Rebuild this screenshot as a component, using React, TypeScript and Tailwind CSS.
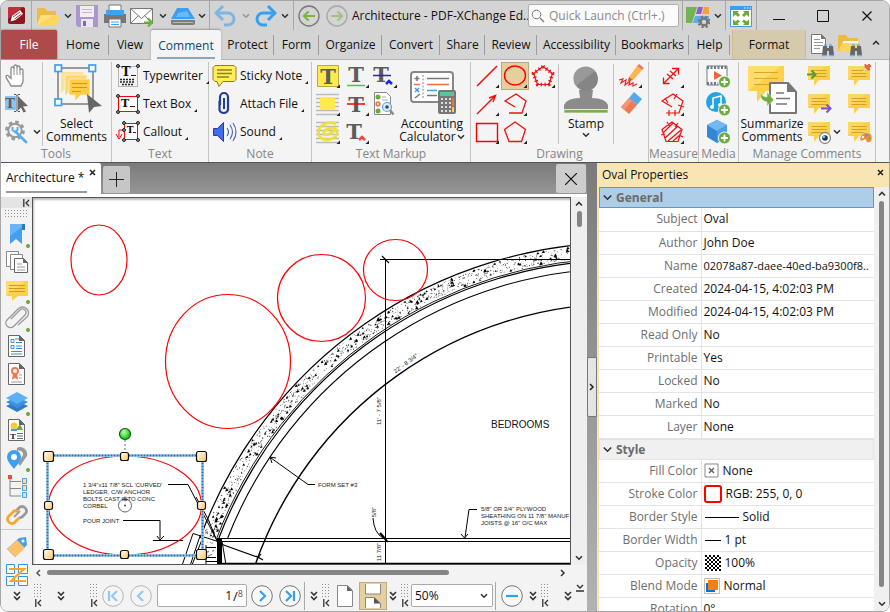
import { useState } from 'react';
import type { ReactNode } from 'react';

const tabs = [
  { label: 'Home', width: 'w-[52px]', divider: true },
  { label: 'View', width: 'w-[42px]', divider: false },
  { label: 'Comment', width: 'w-[70px]', divider: false },
  { label: 'Protect', width: 'w-[53px]', divider: true },
  { label: 'Form', width: 'w-[45px]', divider: true },
  { label: 'Organize', width: 'w-[63px]', divider: true },
  { label: 'Convert', width: 'w-[58px]', divider: true },
  { label: 'Share', width: 'w-[45px]', divider: true },
  { label: 'Review', width: 'w-[52px]', divider: true },
  { label: 'Accessibility', width: 'w-[79px]', divider: true },
  { label: 'Bookmarks', width: 'w-[73px]', divider: true },
  { label: 'Help', width: 'w-[41px]', divider: true },
];

const generalRows: [string, string][] = [
  ['Subject', 'Oval'],
  ['Author', 'John Doe'],
  ['Name', '02078a87-daee-40ed-ba9300f8..'],
  ['Created', '2024-04-15, 4:02:03 PM'],
  ['Modified', '2024-04-15, 4:02:03 PM'],
  ['Read Only', 'No'],
  ['Printable', 'Yes'],
  ['Locked', 'No'],
  ['Marked', 'No'],
  ['Layer', 'None'],
];

/* ---------- shared bits ---------- */

function Icon({ children, className = 'size-7', box = 28 }: { children: ReactNode; className?: string; box?: number }) {
  return (
    <svg viewBox={`0 0 ${box} ${box}`} className={`${className} shrink-0`} fill="none" aria-hidden="true">
      {children}
    </svg>
  );
}

function Chevron({ dim = false, up = false }: { dim?: boolean; up?: boolean }) {
  return (
    <svg width="8" height="6" viewBox="0 0 8 6" className="shrink-0" fill="none" aria-hidden="true">
      <path d={up ? 'M1 4.5 4 1.5l3 3' : 'M1 1.2l3 3 3-3'} stroke={dim ? '#999' : '#333'} strokeWidth="1.6" />
    </svg>
  );
}

function DoubleChevron() {
  return (
    <svg width="8" height="10" viewBox="0 0 8 10" className="shrink-0" fill="none" stroke="#333" strokeWidth="1.6" aria-hidden="true">
      <path d="M1 1l3 3 3-3M1 5.5l3 3 3-3" />
    </svg>
  );
}

function Dots({ cols, rows }: { cols: number; rows: number }) {
  return (
    <svg width={cols * 3} height={rows * 3} className="shrink-0" aria-hidden="true">
      {Array.from({ length: rows }, (_, i) => (
        <path key={i} d={`M0 ${i * 3 + 0.5}h${cols * 3}`} stroke="#8f8f8f" strokeDasharray="1 2" />
      ))}
    </svg>
  );
}

function Collapse() {
  return (
    <svg width="7" height="8" viewBox="0 0 7 8" className="shrink-0" fill="none" stroke="#333" strokeWidth="1.3" aria-hidden="true">
      <path d="M.8 0v8M6 1L3 4l3 3" />
    </svg>
  );
}

function Grip() {
  return (
    <span className="flex w-[10px] shrink-0 flex-col items-center self-start pt-1">
      <Dots cols={3} rows={5} />
      <Collapse />
    </span>
  );
}

function Corner() {
  return <path d="M26 22.500v3.500h-3.500z" fill="#222" />;
}

function Sep() {
  return <span className="w-px shrink-0 self-stretch bg-[#a8a8a8]" />;
}

function IconButton({ label, children, className = '' }: { label: string; children: ReactNode; className?: string }) {
  return (
    <button type="button" aria-label={label} className={`flex shrink-0 items-center justify-center ${className}`}>
      {children}
    </button>
  );
}

function Bubble({ children }: { children?: ReactNode }) {
  return (
    <Icon>
      <path d="M3 4h22v14H14l-5 6v-6H3z" fill="#fdd04a" />
      <path d="M3 18V4h18z" fill="#fff" opacity=".15" />
      <path d="M6.500 8.500h15M6.500 11.500h15M6.500 14.500h15" stroke="#d0a22c" />
      {children}
    </Icon>
  );
}

function Plus() {
  return (
    <>
      <circle cx="20.500" cy="20" r="6" fill="#6cab3f" stroke="#f4f4f4" />
      <path d="M20.500 16.500v7M17 20h7" stroke="#fff" strokeWidth="1.8" />
    </>
  );
}

const serif = "'DejaVu Serif', serif";

function Glyph({ x = 14, y = 22, size = 21, fill = '#5c5c5c' }: { x?: number; y?: number; size?: number; fill?: string }) {
  return (
    <text x={x} y={y} fontFamily={serif} fontSize={size} fontWeight="bold" fill={fill} textAnchor="middle">
      T
    </text>
  );
}

/* ---------- title bar ---------- */

function TitleBar() {
  return (
    <header className="flex h-[29px] shrink-0 items-center bg-[#d4d4d4]">
      <span className="flex w-[30px] shrink-0 items-center justify-center">
        <svg width="17" height="17" viewBox="0 0 17 17" aria-hidden="true">
          <rect width="17" height="17" rx="2" fill="#8d1620" />
          <path d="M0 2a2 2 0 012-2h13L0 12z" fill="#c0303a" />
          <path d="M2.500 14.500l1.500-5.500L12 3l3 4-7.500 6z" fill="#fff" />
          <path d="M5 10l7-5M6.500 12l7-5" stroke="#a51e28" strokeWidth=".9" />
        </svg>
      </span>
      <Sep />
      <IconButton label="Open" className="ml-1">
        <Icon className="h-6 w-6" box={24}>
          <path d="M1 4h8l2 3h9v13H1z" fill="#eebb42" />
          <path d="M1 21L5 11h19l-4 11H1z" fill="#fed65c" />
          <path d="M1 21L5 11h13z" fill="#ffe07c" />
        </Icon>
      </IconButton>
      <IconButton label="Open options" className="w-[15px]"><Chevron /></IconButton>
      <IconButton label="Save">
        <Icon className="h-6 w-6" box={24}>
          <path d="M1 1h22v22H3l-2-2z" fill="#ac96cf" />
          <rect x="5" y="2" width="14" height="11" fill="#f0eef3" />
          <path d="M7 5.500h10M7 8.500h10" stroke="#c0b9c9" />
          <rect x="6" y="15" width="12" height="8" fill="#ece8f1" />
          <rect x="8" y="17" width="3" height="5" fill="#8268ae" />
        </Icon>
      </IconButton>
      <IconButton label="Print" className="ml-1">
        <Icon className="h-6 w-6" box={24}>
          <path d="M6 1h12v7H6z" fill="#fff" stroke="#777" />
          <path d="M1 10h4V7h14v3h4v9H1z" fill="#777" />
          <path d="M3 6h18v5H3z" fill="#3da4f5" />
          <path d="M6 15h12v8H6z" fill="#fff" stroke="#777" />
          <path d="M8 18h8M8 20.500h8" stroke="#3da4f5" />
        </Icon>
      </IconButton>
      <IconButton label="Email" className="ml-[3px]">
        <Icon className="h-6 w-6" box={24}>
          <path d="M.5 4.500h22v15H.5z" fill="#fafafa" stroke="#777" />
          <path d="M.5 4.500l11 10 11-10M.5 19.500l8-8M22.500 19.500l-8-8" stroke="#777" />
          <path d="M14 18.500h7M18 14.500l4 4-4 4" stroke="#6fae3a" strokeWidth="2.200" />
        </Icon>
      </IconButton>
      <IconButton label="Email options" className="w-[17px]"><Chevron /></IconButton>
      <IconButton label="Scan">
        <Icon className="h-6 w-6" box={24}>
          <path d="M6 4h11l7 11H0z" fill="#3d9df0" />
          <path d="M7 9l9-2 3 6H5z" fill="#6ab9f8" />
          <path d="M0 16h24v3a2 2 0 01-2 2H2a2 2 0 01-2-2z" fill="#7d7d7d" />
          <path d="M2 18.500h20" stroke="#b9b9b9" />
        </Icon>
      </IconButton>
      <IconButton label="Scan options" className="w-[14px]"><Chevron /></IconButton>
      <Sep />
      <IconButton label="Undo" className="ml-1 opacity-60">
        <Icon className="h-6 w-6" box={24}>
          <path d="M4 9h10a6 6 0 010 12h-4" stroke="#47a0e8" strokeWidth="3" />
          <path d="M9 2L2 9l7 7" stroke="#47a0e8" strokeWidth="3" />
        </Icon>
      </IconButton>
      <IconButton label="Undo history" className="w-4"><Chevron dim /></IconButton>
      <IconButton label="Redo" className="-ml-px">
        <Icon className="h-6 w-6" box={24}>
          <path d="M20 9H10a6 6 0 000 12h4" stroke="#359ff2" strokeWidth="3" />
          <path d="M15 2l7 7-7 7" stroke="#359ff2" strokeWidth="3" />
        </Icon>
      </IconButton>
      <IconButton label="Redo history" className="w-4"><Chevron /></IconButton>
      <Sep />
      <IconButton label="Back" className="ml-1">
        <Icon className="h-[22px] w-[22px]" box={22}>
          <circle cx="11" cy="11" r="10" stroke="#777" strokeWidth="1.300" />
          <path d="M17 11H7M10.500 6.500L6 11l4.500 4.500" stroke="#78b63c" strokeWidth="2.200" />
        </Icon>
      </IconButton>
      <IconButton label="Forward" className="ml-[6px] opacity-60">
        <Icon className="h-[22px] w-[22px]" box={22}>
          <circle cx="11" cy="11" r="10" stroke="#888" strokeWidth="1.300" />
          <path d="M5 11h10M11.500 6.500L16 11l-4.500 4.500" stroke="#82b650" strokeWidth="2.200" />
        </Icon>
      </IconButton>
      <h1 className="min-w-0 flex-1 overflow-hidden pl-1 whitespace-nowrap">Architecture - PDF-XChange Ed..</h1>
      <label className="flex h-[23px] w-[151px] shrink-0 items-center gap-1 rounded-xs border border-[#b0b0b0] bg-[#fbfbfb] px-[2px]">
        <Icon className="h-[14px] w-[14px]" box={14}>
          <circle cx="5.500" cy="5.500" r="4.300" stroke="#777" />
          <path d="M9 9l4 4" stroke="#777" strokeWidth="1.300" />
        </Icon>
        <input aria-label="Quick Launch" placeholder="Quick Launch (Ctrl+.)" className="w-full min-w-0 bg-transparent outline-none placeholder:text-[#8a8a8a]" />
      </label>
      <span className="ml-[3px] flex self-stretch"><Sep /></span>
      <IconButton label="UI options" className="ml-[3px]">
        <Icon className="h-6 w-6" box={24}>
          <path d="M0 3h11L6 19H0z" fill="#72b356" />
          <path d="M12 3h5l-2 7h-5z" fill="#8f5bd0" />
          <path d="M18 3h5v7h-7z" fill="#f3a13c" />
          <path d="M9 12h14v7H7z" fill="#58aef1" />
          <circle cx="18" cy="18" r="5" stroke="#777" strokeWidth="3" strokeDasharray="2 2" />
          <circle cx="18" cy="18" r="3.400" fill="#d4d4d4" stroke="#777" strokeWidth="2.400" />
        </Icon>
      </IconButton>
      <IconButton label="UI options menu" className="w-[15px]"><Chevron /></IconButton>
      <Sep />
      <IconButton label="Full screen" className="w-[30px]">
        <Icon className="h-[22px] w-[22px]" box={22}>
          <path d="M.5 2.500h21v19H.5z" fill="#fff" stroke="#3b9df0" />
          <path d="M0 1h22v4H0z" fill="#3b9df0" />
          <path d="M14 3h1.500M17 3h1.500M20 3h1" stroke="#fff" />
          <g fill="#6aaa36">
            <path d="M3 6h6L7.500 7.500l2.500 2.500-2 2L5.500 9.500 3 12z" />
            <path d="M19 6h-6l1.500 1.500L12 10l2 2 2.500-2.500L19 12z" />
            <path d="M3 20h6l-1.500-1.500 2.500-2-2-2-2.500 2L3 14.500z" />
            <path d="M19 20h-6l1.500-1.500-2.500-2 2-2 2.500 2 2.500-2z" />
          </g>
        </Icon>
      </IconButton>
      <Sep />
      <IconButton label="Minimize" className="h-full w-11">
        <svg width="12" height="12" stroke="#111" aria-hidden="true"><path d="M0 9.500h12" /></svg>
      </IconButton>
      <IconButton label="Maximize" className="h-full w-11">
        <svg width="12" height="12" stroke="#111" fill="none" aria-hidden="true"><path d="M.5.5h11v11H.5z" /></svg>
      </IconButton>
      <IconButton label="Close" className="h-full w-11">
        <svg width="12" height="12" stroke="#111" fill="none" aria-hidden="true"><path d="M1.500 1.500l9 9M10.500 1.500l-9 9" strokeWidth="1.200" /></svg>
      </IconButton>
    </header>
  );
}

/* ---------- ribbon tabs ---------- */

function Binoculars() {
  return (
    <>
      <path d="M13 13h4v2h2v-2h4l1 9h-5v-4h-2v4h-5z" fill="#666" />
      <path d="M14 12h3M19 12h3M12 22.500h5M19 22.500h5" stroke="#5fb0ee" strokeWidth="1.500" />
    </>
  );
}

function RibbonTabs({ active, onSelect }: { active: string; onSelect: (label: string) => void }) {
  return (
    <nav aria-label="Ribbon" className="flex h-[30px] shrink-0 items-stretch border-b border-[#b4b4b4] bg-[#d4d4d4]">
      <button type="button" className="w-14 shrink-0 rounded-t-xs bg-[#ad4a4a] pt-px text-white shadow-[0_0_2px_#555]">File</button>
      {tabs.map((tab) => {
        const isActive = tab.label === active;
        return (
          <button
            key={tab.label}
            type="button"
            aria-current={isActive ? 'page' : undefined}
            onClick={() => onSelect(tab.label)}
            className={`relative flex shrink-0 items-center justify-center pt-px whitespace-nowrap ${tab.width} ${
              isActive ? 'z-10 -mb-px rounded-t-xs bg-[#f4f4f4] text-[#124670] shadow-[0_-1px_2px_#999]' : 'text-[#111]'
            }`}
          >
            {tab.label}
            {isActive && <span className="absolute inset-x-[6px] bottom-px h-[2px] bg-[#88a6bd]" />}
            {tab.divider && !isActive && <span className="absolute top-[5px] right-0 h-5 w-px bg-[#9b9b9b]" />}
          </button>
        );
      })}
      <button type="button" className="ml-[2px] w-[74px] shrink-0 border-x border-[#cbbd8c] bg-[#d5cbac] pt-px text-[#111]">Format</button>
      <IconButton label="Find in page" className="ml-1">
        <Icon className="h-6 w-6" box={24}>
          <path d="M1.500 1.500h10l4 4v15h-14z" fill="#fff" stroke="#777" />
          <path d="M11 1v5h5z" fill="#777" />
          <path d="M4 6.500h6M4 9.500h9M4 12.500h9M4 15.500h6" stroke="#999" />
          <Binoculars />
        </Icon>
      </IconButton>
      <IconButton label="Find in folder" className="ml-1">
        <Icon className="h-6 w-6" box={24}>
          <path d="M0 2h8l2 3h10v14H0z" fill="#eebb42" />
          <path d="M5 8h15v11H3z" fill="#fff" />
          <path d="M0 19l4-9h19l-4 9z" fill="#fed65c" />
          <Binoculars />
        </Icon>
      </IconButton>
      <IconButton label="Collapse ribbon" className="ml-auto w-[26px] pb-1"><Chevron up /></IconButton>
    </nav>
  );
}

/* ---------- ribbon ---------- */

function Group({ label, width, children }: { label: string; width: string; children: ReactNode }) {
  return (
    <section aria-label={label} className={`flex shrink-0 flex-col border-r border-[#c3c3c3] ${width}`}>
      <div className="flex h-[84px]">{children}</div>
      <p className="text-center leading-4 whitespace-nowrap text-[#858585]">{label}</p>
    </section>
  );
}

function Tool({ label, children, active = false }: { label: string; children: ReactNode; active?: boolean }) {
  return (
    <button type="button" aria-label={label} aria-pressed={active} className={`block size-7 ${active ? 'bg-[#e5cf9c] outline -outline-offset-1 outline-[#b6a98a]' : ''}`}>
      <Icon>{children}</Icon>
    </button>
  );
}

function TextTool({ label, children }: { label: string; children: ReactNode }) {
  return (
    <button type="button" className="flex h-7 items-center gap-[2px] whitespace-nowrap">
      <Icon>{children}</Icon>
      <span>{label}</span>
      <svg width="4" height="4" className="mb-[5px] ml-px shrink-0 self-end" aria-hidden="true"><path d="M3 0v3H0z" fill="#222" /></svg>
    </button>
  );
}

function BigTool({ lines, width, caret, children }: { lines: string[]; width: string; caret?: 'inline' | 'below'; children: ReactNode }) {
  return (
    <button type="button" className={`flex shrink-0 flex-col items-center pt-[2px] leading-[13px] whitespace-nowrap ${width}`}>
      <Icon className="h-[50px] w-[50px]" box={50}>{children}</Icon>
      <span className="mt-[3px]">{lines[0]}</span>
      {lines[1] && (
        <span className="flex items-center gap-px">
          {lines[1]}
          {caret === 'inline' && <Chevron />}
        </span>
      )}
      {caret === 'below' && <span className="mt-[2px]"><Chevron /></span>}
    </button>
  );
}

const markers = (pts: number[][]) => pts.map(([x, y]) => <circle key={`${x}-${y}`} cx={x} cy={y} r="1.500" fill="#888" stroke="#222" />);

function Ribbon() {
  return (
    <div className="flex h-[102px] shrink-0 overflow-hidden bg-[#f4f4f4] pt-[2px]">
      <Group label="Tools" width="w-[111px]">
        <div className="flex w-[42px] flex-col border-r border-[#c3c3c3] pl-px">
          <Tool label="Hand">
            <path d="M9 24c-1-3-5-7-5-9.500 0-1.500 2-1.500 3 0l2 2V6.500c0-2 3-2 3 0V4.500c0-2 3-2 3 0v1c0-2 3-2 3 0v3c0-2 3-2 3 0V19c0 3-2 3.500-2 5z" fill="#fff" stroke="#8b8b8b" strokeWidth="1.300" />
            <path d="M12 6v7M15 5v8M18 8v5" stroke="#8b8b8b" />
          </Tool>
          <Tool label="Select text">
            <rect x="3" y="6" width="11" height="14" fill="#8cc4f1" />
            <Glyph x={8} y={18} size={13} />
            <path d="M12 4.500h2l1 1 1-1h2M15 5v16M12 21.500h2l1-1 1 1h2" stroke="#555" />
            <path d="M16 6l10 10-5 .5 3 5-2.500 1-2.500-5-3 3z" fill="#666" />
          </Tool>
          <div className="flex items-center gap-[3px]">
            <Tool label="Other tools">
              <circle cx="13" cy="12.500" r="8.500" stroke="#999" strokeWidth="2.800" strokeDasharray="3.500 3.170" />
              <circle cx="13" cy="12.500" r="6.700" fill="#f4f4f4" stroke="#999" strokeWidth="2" />
              <path d="M14 14l10 10" stroke="#58aef1" strokeWidth="2.800" strokeLinecap="round" />
              <path d="M10.500 9v3l2.500 2 2.500-2V9" stroke="#58aef1" strokeWidth="2" />
            </Tool>
            <Chevron />
          </div>
        </div>
        <BigTool lines={['Select', 'Comments']} width="w-[67px]">
          <path d="M6 4h35v36H6z" stroke="#999" strokeWidth="2" />
          <path d="M9 8h22v16H14l-5 5z" fill="#fbe294" />
          <path d="M13 11h22v16H18l-5 5z" fill="#fdd86c" stroke="#f4f4f4" strokeWidth=".7" />
          <path d="M17 15h21v16H29l-6 6v-6h-6z" fill="#fdcc42" stroke="#f4f4f4" strokeWidth=".7" />
          <path d="M20 19.500h15M20 23.500h15M20 27.500h9" stroke="#c89a1c" />
          <path d="M35 30l15 12-8 1-5 6z" fill="#666" />
          {[[6, 4], [40, 4], [6, 38]].map(([x, y]) => (
            <rect key={`${x}-${y}`} x={x - 3} y={y - 3} width="6.500" height="6.500" fill="#fff" stroke="#3f9fec" strokeWidth="1.700" />
          ))}
        </BigTool>
      </Group>

      <Group label="Text" width="w-[97px]">
        <div className="pl-px">
          <TextTool label="Typewriter">
            <path d="M5.500 4.500h19v20h-19z" stroke="#777" strokeDasharray="1 1" />
            <Glyph x={13} y={14} size={12} fill="#111" />
            <path d="M18 13.500h5" stroke="#222" />
            <path d="M7 17.500h15M7 20h15M9 22.500h11" stroke="#222" strokeDasharray="2 1" strokeWidth="1.500" />
            {markers([[5, 4], [25, 4]])}
          </TextTool>
          <TextTool label="Text Box">
            <path d="M5.500 6.500h19v15h-19z" fill="#fff" stroke="red" />
            <Glyph x={12} y={17} size={11} fill="#111" />
            <path d="M17 16.500h5" stroke="#222" />
            {markers([[5, 6], [25, 6], [5, 22], [25, 22]])}
          </TextTool>
          <TextTool label="Callout">
            <path d="M11.500 5.500h13v16h-13z" fill="#fff" stroke="red" />
            <path d="M11 12H6v7M3 16l3 5 3-5" stroke="red" />
            <Glyph x={17} y={15} size={9} fill="#111" />
            <path d="M20 14.500h3" stroke="#222" />
            {markers([[11, 5], [25, 5], [11, 12], [11, 22], [25, 22]])}
          </TextTool>
        </div>
      </Group>

      <Group label="Note" width="w-[103px]">
        <div className="pl-px">
          <TextTool label="Sticky Note">
            <path d="M6 3.500h18l2 2v12l-2 2H13l-4 5-2-5H5l-2-2v-12l2-2z" fill="#ffee58" stroke="#927d1e" />
            <path d="M7 8h15M7 11.500h15M7 15h12" stroke="#8f8220" strokeWidth="1.300" />
          </TextTool>
          <TextTool label="Attach File">
            <path d="M10 15V7a4 4 0 018 0v13a4.500 4.500 0 01-8.500 0v-9" stroke="#273c96" strokeWidth="2.200" />
            <path d="M14 8v11" stroke="#273c96" strokeWidth="2" />
          </TextTool>
          <TextTool label="Sound">
            <path d="M3.500 10.500h4l6-6v19l-6-6h-4z" fill="#416cf0" stroke="#273c96" />
            <path d="M17 10q3 4 0 8M20 7q5 7 0 14M23 5q6 9 0 18" stroke="#4a5fa8" strokeWidth="1.100" />
          </TextTool>
        </div>
      </Group>

      <Group label="Text Markup" width="w-[159px]">
        <div className="grid w-[88px] grid-flow-col grid-cols-3 grid-rows-3 pl-[2px]">
          <Tool label="Highlight"><path d="M3.500 3.500h21v21h-21z" fill="#ffe94d" stroke="#b7a84a" /><Glyph x={14} y={22} /><Corner /></Tool>
          <Tool label="Highlight area">
            <path d="M2 4.500h23M2 8.500h23M2 12.500h23M2 16.500h23M2 20.500h23M2 24.500h23" stroke="#bbb" strokeWidth="1.500" />
            <path d="M6 7h15v13H6z" fill="#ffe94d" /><Corner />
          </Tool>
          <Tool label="Highlight freehand">
            <path d="M2 4.500h23M2 8.500h23M2 12.500h23M2 16.500h23M2 20.500h23M2 24.500h23" stroke="#bbb" strokeWidth="1.500" />
            <path d="M22 6C13 2 4 8 4.500 15s9 8 14 5.500c7-3.500 5-11-.5-10.500-5 .5-10 3.500-8 6s7-.5 11-4" stroke="#f0df3a" strokeWidth="2.800" /><Corner />
          </Tool>
          <Tool label="Underline"><Glyph x={13} y={20} /><path d="M4 23.500h18" stroke="#3fce3f" strokeWidth="1.500" /><Corner /></Tool>
          <Tool label="Strikeout"><Glyph x={13} y={22} /><path d="M4 14h18" stroke="red" strokeWidth="1.500" /><Corner /></Tool>
          <Tool label="Insert text"><Glyph x={11} y={21} /><path d="M16 22l3-3 3 3" stroke="#e44" strokeWidth="2.500" /><Corner /></Tool>
          <Tool label="Replace text"><Glyph x={10} y={20} /><path d="M2 13.500h18" stroke="#22d" strokeWidth="1.500" /><path d="M15 22l3-3 3 3" stroke="#22e" strokeWidth="2.500" /><Corner /></Tool>
          <Tool label="Review markup">
            <path d="M3.500 2.500h12l4 4v18h-16z" fill="#fff" stroke="#888" />
            <circle cx="7" cy="7" r="2.500" fill="#6aaa36" /><circle cx="7" cy="14" r="1.800" stroke="#ef7857" strokeWidth="1.800" /><circle cx="7" cy="21" r="2.500" fill="#6aaa36" />
            <path d="M11 7h4M11 10h6" stroke="#aaa" />
            <circle cx="16" cy="17" r="4.500" fill="#d5ebfb" stroke="#55a8e6" strokeWidth="1.200" /><circle cx="16" cy="17" r="1.800" fill="#444" />
            <path d="M19 20l3.500 4.500" stroke="#888" strokeWidth="2.200" />
          </Tool>
        </div>
        <BigTool lines={['Accounting', 'Calculator']} width="w-[64px]" caret="inline">
          <rect x="4" y="8" width="42" height="30" rx="3" fill="#fff" stroke="#888" strokeWidth="2" />
          <path d="M16 11v24" stroke="#888" strokeDasharray="2 1.500" />
          <path d="M20 14.500h22" stroke="#777" strokeWidth="1.500" /><path d="M20 20.500h22" stroke="#ef7043" strokeWidth="1.500" /><path d="M20 26.500h10" stroke="#3f9fec" strokeWidth="1.500" /><path d="M20 31.500h10" stroke="#777" strokeWidth="1.500" />
          <path d="M10 12v5M7.500 14.500h5M8 34l5-4" stroke="#777" strokeWidth="1.500" /><path d="M7 20.500h6" stroke="#ef7043" strokeWidth="1.500" /><path d="M8 24l4 4M12 24l-4 4" stroke="#3f9fec" strokeWidth="1.500" />
          <rect x="31" y="26" width="18" height="24" rx="2" fill="#777" />
          <path d="M33 28h14v4H33z" fill="#5cc39a" />
          {[35, 39, 43, 47].map((y) => <path key={y} d={`M34 ${y}h10`} stroke="#ddd" strokeWidth="2" strokeDasharray="2 2" />)}
          <path d="M46 34v8" stroke="#ef7043" strokeWidth="2" /><path d="M46 43v5" stroke="#fdcc42" strokeWidth="2" />
        </BigTool>
      </Group>

      <Group label="Drawing" width="w-[178px]">
        <div className="grid w-[87px] grid-flow-col grid-cols-[28px_28px_28px] grid-rows-3 pl-[2px]">
          <Tool label="Line"><path d="M4 24L24 4" stroke="red" strokeWidth="1.400" /><Corner /></Tool>
          <Tool label="Arrow"><path d="M4 24L22 6M16 8l6.500-2.500L20 12" stroke="#e11" strokeWidth="1.400" /><Corner /></Tool>
          <Tool label="Rectangle"><path d="M3.500 5.500h21v18h-21z" stroke="red" strokeWidth="1.400" /><Corner /></Tool>
          <Tool label="Oval" active><ellipse cx="14" cy="13.500" rx="10.500" ry="9.500" stroke="red" strokeWidth="1.400" /><Corner /></Tool>
          <Tool label="Polyline"><path d="M14 17L4 11l11-7 10 7-4 12H8" stroke="#e11" strokeWidth="1.300" /><Corner /></Tool>
          <Tool label="Polygon"><path d="M14 4l10.500 7.500-4 12H8L3.500 11.500z" stroke="#e11" strokeWidth="1.300" /><Corner /></Tool>
          <Tool label="Cloud">
            <path d="M14 4.500l9.500 7-3.500 11H8.500L4.500 11.500z" stroke="#e11" strokeWidth="1.200" strokeLinejoin="round" />
            <path d="M14 4.500l9.500 7-3.500 11H8.500L4.500 11.500z" stroke="#e11" strokeWidth="3.600" strokeDasharray="1.300 2.500" /><Corner />
          </Tool>
        </div>
        <div className="my-[2px] border-l border-[#c3c3c3]" />
        <BigTool lines={['Stamp']} width="w-[54px]" caret="below">
          <path d="M18 26h14l-1 8q13 0 16 7v4H3v-4q3-7 16-7z" fill="#8b8b8b" />
          <circle cx="25" cy="15" r="12" fill="#858585" />
          <path d="M15 22A12 12 0 0134 7z" fill="#999" />
          <path d="M3 45.500h44v3.500H3z" fill="#7cb046" stroke="#f4f4f4" strokeWidth=".7" />
        </BigTool>
        <div className="my-[2px] border-l border-[#c3c3c3]" />
        <div className="pl-[2px]">
          <Tool label="Pencil">
            <path d="M13 15L21 4l5 4-9 10-5 1z" fill="#ffb34b" /><path d="M21 4l2-2 5 4-2 2z" fill="#ef7857" /><path d="M13 15l4 3-5 1z" fill="#a67441" />
            <path d="M3 18l4-1-2 4 5-3-1 5 5-4-1 4 4-2v3l4-2" stroke="#e22" strokeWidth="1.200" /><Corner />
          </Tool>
          <Tool label="Eraser"><path d="M13 8l5-6 8 7-5 6z" fill="#55a8ee" /><path d="M13 8l8 7-8 9-8-7z" fill="#ef7857" /><path d="M13 8l3 3-8 9-3-3z" fill="#f6947a" /></Tool>
        </div>
      </Group>

      <Group label="Measure" width="w-[50px]">
        <div className="pl-[9px]">
          <Tool label="Distance"><path d="M6 21L20 7M5.500 15.500V21.500h6M14 6.500h6.500v6M9 12l6 5M12 9l6 5" stroke="#e11" strokeWidth="1.300" /><Corner /></Tool>
          <Tool label="Perimeter"><path d="M14 17L4 11l11-7 10 7-4 12H8M7 8l3 5M19 4l-3 5M20 15l6 2M11 20v6M17 20v6" stroke="#e11" strokeWidth="1.200" /><Corner /></Tool>
          <Tool label="Area"><path d="M14 4l10 7.500-4 12H8L4 11.500zM5 15L15 5M7 20L20 8M10 23L23 12M15 23l7-6M9 4l3 5M20 5l-3 4M21 17l4 2M3 17l4-1" stroke="#e11" strokeWidth="1.200" /><Corner /></Tool>
        </div>
      </Group>

      <Group label="Media" width="w-[40px]">
        <div className="pl-[5px]">
          <Tool label="Video">
            <path d="M3 4h20v19H3z" fill="#fff" stroke="#6a7a86" /><path d="M3 5.500h20M3 21.500h20" stroke="#6a7a86" strokeWidth="3" strokeDasharray="2 1.500" /><path d="M10 9v9l8-4.500z" fill="#ef6540" /><Plus />
          </Tool>
          <Tool label="Audio"><circle cx="12" cy="12" r="10" fill="#22a4e6" /><path d="M9 17V8l8-2v9" stroke="#fff" strokeWidth="1.500" /><circle cx="8" cy="17" r="2" fill="#fff" /><circle cx="16" cy="15" r="2" fill="#fff" /><Plus /></Tool>
          <Tool label="3D object"><path d="M13 2l10 5v12l-10 6-10-6V7z" fill="#3486d6" /><path d="M13 2l10 5-10 6L3 7z" fill="#72b9f4" /><path d="M13 13l10-6v12l-10 6z" fill="#4a9fe8" /><Plus /></Tool>
        </div>
      </Group>

      <Group label="Manage Comments" width="w-[137px]">
        <BigTool lines={['Summarize', 'Comments']} width="w-[66px]">
          <path d="M1 2h36v25H19l-9 11V27H1z" fill="#fdd04a" /><path d="M1 27V2h33z" fill="#ffdc6c" />
          <path d="M7 8.500h24M7 14.500h24M7 20.500h16" stroke="#d9a82a" />
          <path d="M23 19h18l8 9v21H23z" fill="#fff" stroke="#777" strokeWidth="2" strokeLinejoin="round" /><path d="M40 19v9h9z" fill="#777" />
          <path d="M29 29h8M29 34.500h14M29 40h11" stroke="#777" strokeWidth="1.500" />
          <path d="M13 28q2 5 7 5v-5l7 8-7 6v-4q-7-1-7-10z" fill="#6fae3a" stroke="#f4f4f4" strokeWidth=".6" />
        </BigTool>
        <div>
          <IconButton label="Import comments"><Bubble><path d="M2 12.500h8M6.500 8.500l4 4-4 4" stroke="#5a9d2c" strokeWidth="2" /></Bubble></IconButton>
          <IconButton label="Export comments"><Bubble><path d="M16 18.500h9M21.500 14.500l4 4-4 4" stroke="#7c51c9" strokeWidth="2" /></Bubble></IconButton>
          <IconButton label="Show comments"><Bubble><circle cx="20" cy="20" r="5.500" fill="#fff" stroke="#888" strokeWidth="1.300" /><circle cx="20" cy="20" r="2.800" fill="#234" /><circle cx="19" cy="19" r="1.200" fill="#7cc3fb" /></Bubble></IconButton>
        </div>
        <div className="flex flex-col justify-end pb-[11px]"><Chevron /></div>
        <div className="pl-[4px]">
          <IconButton label="Pin comments"><Bubble><path d="M18 10l4-4" stroke="#ddd" strokeWidth="1.500" /><path d="M20 2l2 2 2-2 2 2-2 2 1 2h-2l-3-3z" fill="#ef6540" stroke="#ef6540" /></Bubble></IconButton>
          <IconButton label="Comments list"><Bubble /></IconButton>
          <IconButton label="Comment styles"><Bubble><path d="M15 20q1-5 6-5.500 6 0 6 5t-4 5q-2 0-2-2t-3 0-3-2.500z" fill="#f08c32" stroke="#f4f4f4" strokeWidth=".6" /><circle cx="18" cy="19" r="1.200" fill="#fff" /><circle cx="21.500" cy="17.500" r="1.200" fill="#3f9fec" /><circle cx="24.500" cy="20" r="1.200" fill="#72b356" /></Bubble></IconButton>
        </div>
      </Group>
    </div>
  );
}

/* ---------- navigation side bar ---------- */

const page = (
  <>
    <path d="M3.500 1.500h11l5 5v16h-16z" fill="#fff" stroke="#666" />
    <path d="M14 1v6h6z" fill="#666" />
  </>
);

const sideItems: { label: string; dot?: boolean; art: ReactNode }[] = [
  { label: 'Bookmarks', dot: true, art: <><path d="M5 2h15v6h-3v14l-6-5-6 5z" fill="#459ff0" /><path d="M17 2h3v6h-3z" fill="#2f78bd" /><path d="M5 14L17 5V2H5z" fill="#68b5f6" /></> },
  { label: 'Thumbnails', art: <><path d="M1.500 1.500h12v15h-12z" fill="#fff" stroke="#888" /><path d="M5.500 4.500h12v15h-12z" fill="#fff" stroke="#888" /><path d="M9.500 8.500h9l4 4v10h-13z" fill="#fff" stroke="#666" /><path d="M18 8v5h5z" fill="#666" /><path d="M12 14h5M12 17h8M12 20h8" stroke="#999" /></> },
  { label: 'Comments', dot: true, art: <><path d="M1 3h22v15H13l-6 5v-5H1z" fill="#fdd04a" /><path d="M1 18V3h19z" fill="#ffdc6c" /><path d="M4 7.500h16M4 10.500h16M4 13.500h16" stroke="#c79b27" /></> },
  { label: 'Attachments', dot: true, art: <path d="M6 13L15 4a3 3 0 015 5L9 20a4.500 4.500 0 01-7-6L13 3a6 6 0 019 8l-9 8" stroke="#999" strokeWidth="1.300" /> },
  { label: 'Fields', art: <>{page}<path d="M6 5.500h3v3H6zM6 11.500h3v3H6z" stroke="#3b8fdc" /><path d="M10 5h4M11 8.500h6M11 12h6M11 14.500h6M6 17.500h11M6 20h11" stroke="#3b8fdc" /></> },
  { label: 'Signatures', art: <>{page}<path d="M8 11l-1 7 3-2 3 2-1-7z" fill="#ef7857" /><circle cx="10" cy="9" r="3" fill="#fff" stroke="#ef7857" strokeWidth="2" /><path d="M14 13h3M14 16h3M6 20h11" stroke="#999" /></> },
  { label: 'Layers', dot: true, art: <><path d="M1 16l11-5 11 5-11 6z" fill="#2f7cc4" /><path d="M1 12l11-5 11 5-11 6z" fill="#3b92e0" /><path d="M1 8l11-6 11 6-11 6z" fill="#5cb0f7" /></> },
  { label: 'Content', art: <>{page}<circle cx="9" cy="8" r="3.500" fill="#fdc93a" /><path d="M11 12l4-6 3 6z" fill="#6aaa36" /><path d="M6 11h6v2H6z" fill="#3f9fec" /><Glyph x={8} y={21} size={8} fill="#333" /><path d="M12 15.500h6M12 18h6M12 20.500h6" stroke="#666" /></> },
  { label: 'Destinations', dot: true, art: <><path d="M12 2a7 7 0 0110 8l-7 10-2-3 5-8a4 4 0 00-6-4z" fill="#999" /><path d="M9 4a7 7 0 017 7c0 4-4 8-7 12-3-4-7-8-7-12a7 7 0 017-7z" fill="#3f9fec" /><circle cx="9" cy="11" r="3" fill="#fff" /></> },
  { label: 'Model tree', art: <><path d="M5 5v17h11M5 7.500h11M5 14.500h11" stroke="#888" /><path d="M3 1h4v4H3z" fill="#ef4a2f" /><path d="M17.500 4.500h4v5h-4zM17.500 11.500h4v5h-4zM17.500 18.500h4v5h-4z" fill="#ffe07c" stroke="#4a9fe8" /></> },
  { label: 'Links', art: <><path d="M11 9l4-4a4.500 4.500 0 016 6l-4 4-3 1" stroke="#999" strokeWidth="2.800" /><path d="M13 9L9 9l-6 6a4.500 4.500 0 006 6l5-5" stroke="#fba62b" strokeWidth="2.800" /><path d="M9 15l6-6" stroke="#999" strokeWidth="1.800" /></> },
  { label: 'Tags', art: <><path d="M2 14L14 3l7-1 1 8-12 12z" fill="#449fec" /><path d="M2 14L12 5l8 8-10 9z" fill="#fdc268" /><circle cx="18" cy="6" r="1.500" fill="#fff" /></> },
  { label: 'Reading order', art: <><path d="M1.500 1.500h8v9h-8zM13.500 1.500h9v9h-9zM1.500 13.500h8v9h-8zM13.500 13.500h9v9h-9z" stroke="#3b92e0" fill="#fff" /><path d="M4 6h15L6 18h15" stroke="#fba62b" strokeWidth="2.200" /></> },
];

function SideBar() {
  return (
    <aside className="flex w-[31px] shrink-0 flex-col items-center overflow-hidden bg-[#f3f3f3]">
      <span className="mb-[2px] flex h-[11px] w-full items-center justify-end bg-[#e4e4e4] pr-[2px]"><Collapse /></span>
      <Dots cols={8} rows={3} />
      <div className="mt-px flex w-full flex-col items-center">
        {sideItems.map((item) => (
          <div key={item.label} className={`w-full ${item.label === 'Tags' ? 'mt-px border-t border-[#ccc] pt-[3px]' : ''}`}>
            <button type="button" aria-label={item.label} className="relative flex h-7 w-full items-center justify-center">
              <Icon className="h-6 w-6" box={24}>{item.art}</Icon>
              {item.dot && <span className="absolute right-[2px] bottom-0 size-1 rounded-full bg-[#6aa52e]" />}
            </button>
          </div>
        ))}
      </div>
      <span className="mt-[2px]"><DoubleChevron /></span>
    </aside>
  );
}

/* ---------- drawing ---------- */

const CX = 623;
const CY = 693;

// x of an arc of radius r at a given y, left half
const arcX = (r: number, y: number) => CX - Math.sqrt(r * r - (CY - y) * (CY - y));

function Arc({ r, to = 538, width = 1 }: { r: number; to?: number; width?: number }) {
  return <path d={`M${arcX(r, to).toFixed(1)} ${to}A${r} ${r} 0 0 1 ${CX} ${CY - r}`} stroke="#000" strokeWidth={width} />;
}

// aggregate pattern inside the concrete wall
const specks = (() => {
  let seed = 11;
  const rnd = () => {
    seed = (seed * 16807) % 2147483647;
    return seed / 2147483647;
  };
  return Array.from({ length: 860 }, () => {
    const a = ((200 + rnd() * 64) * Math.PI) / 180;
    const r = 436.5 + rnd() * 12;
    const big = rnd() > 0.84;
    const s = big ? 1 + rnd() * 0.9 : 0.4 + rnd() * 0.3;
    return { x: CX + r * Math.cos(a), y: CY + r * Math.sin(a), s, k: rnd() };
  });
})();

function Handle({ x, y, s }: { x: number; y: number; s: number }) {
  return <rect x={x - s / 2} y={y - s / 2} width={s} height={s} rx="2" fill="url(#handle)" stroke="#111" strokeWidth="1.200" />;
}

function Note({ x, y, lines }: { x: number; y: number; lines: string[] }) {
  return (
    <text fontSize="6" fill="#222">
      {lines.map((line, i) => (
        <tspan key={line} x={x} y={y + i * 7}>{line}</tspan>
      ))}
    </text>
  );
}

function Canvas() {
  return (
    <svg className="size-full" role="img" aria-label="Architecture drawing" fill="none" fontFamily="'Liberation Sans', Arial, sans-serif">
      <defs>
        <linearGradient id="handle" x1="0" y1="0" x2="1" y2="1">
          <stop offset="0" stopColor="#fff" />
          <stop offset="1" stopColor="#fcc65a" />
        </linearGradient>
        <radialGradient id="knob" cx=".4" cy=".35">
          <stop offset="0" stopColor="#c2ffb5" />
          <stop offset="1" stopColor="#1fd41f" />
        </radialGradient>
      </defs>
      <g transform="translate(-33 -198)">
        {specks.map((p, i) => (
          <path key={i} d={`M${p.x.toFixed(1)} ${(p.y - p.s).toFixed(1)}l${p.s.toFixed(1)} ${(p.s * (1 + p.k)).toFixed(1)}-${(p.s * 2).toFixed(1)} ${(p.s * 0.4).toFixed(1)}z`} fill="#000" />
        ))}
        <Arc r={450.4} width={1.2} />
        <Arc r={434.8} width={0.9} />
        <Arc r={432.8} width={1.2} />
        <Arc r={424.6} width={1.1} />
        <Arc r={389.5} to={566} width={1.4} />

        <g stroke="#000">
          <path d="M218 538.500H600M218 541.500H600" />
          <path d="M222 563.500H600" strokeWidth="1.500" />
          <path d="M380 259.500H600M385.500 259v306" />
          <path d="M382 256l7 7M382 535l6 7" strokeWidth="1.200" />
          <path d="M373 518q1 15 10 20" />
          <path d="M380 533l6 7" strokeWidth="2" />
          <path d="M168 484.500h20l29 56M196 497l12 22 11 27" />
          <path d="M123 520.500h37v18M157 536l3 4 4-4M153 540.500h30" />
          <path d="M271 458l37 26.500h7M270 457l6 1M270 457l2 6" />
          <path d="M477 509.500h-8l-4 28M461 534l3.500 4 3.500-4" />
          <path d="M218 543l42 15M256 556l7 4M257 559l4-5" strokeWidth="1.200" />
          <path d="M193 533.500l-11 32M193 533.500l25 8M203 537l-11 28M200 536l-10 30M206 545v20M206 547.500h10M206 557.500h10M206 561.500h16M222 541l4 24" />
          <path d="M219.500 538v27" strokeWidth="5" />
        </g>
        <path d="M208 551l1 1-2 .5zM211 554l1 1-2 .5zM213 550l1 1-2 .5zM209 555l1 1-2 .5z" fill="#000" />

        <g stroke="red" strokeWidth="1.200">
          <ellipse cx="99" cy="260" rx="28" ry="35" />
          <ellipse cx="228" cy="361.500" rx="62.500" ry="67" />
          <ellipse cx="321.500" cy="298" rx="44" ry="43.500" />
          <ellipse cx="395.500" cy="270" rx="32" ry="30.500" />
          <ellipse cx="125" cy="505.500" rx="76.500" ry="49.500" />
        </g>

        <Note x={83} y={487} lines={['1 3/4"x11 7/8" SCL \'CURVED\'', 'LEDGER, C/W ANCHOR', 'BOLTS CAST INTO CONC', 'CORBEL']} />
        <Note x={83} y={523} lines={['POUR JOINT']} />
        <Note x={318} y={487} lines={['FORM SET #3']} />
        <Note x={481} y={511} lines={['5/8" OR 3/4" PLYWOOD', 'SHEATHING ON 11 7/8" MANUF', 'JOISTS @ 16" O/C MAX']} />
        <g fontSize="6" fill="#222" textAnchor="middle">
          <text transform="translate(381 411) rotate(-90)">11' - 7 5/8"</text>
          <text transform="translate(407 365) rotate(-37)">22' - 8 3/4"</text>
          <text transform="translate(376 512) rotate(-90)">5/8"</text>
          <text transform="translate(381 552) rotate(-90)">11 7/8"</text>
        </g>
        <text x="491" y="428" fontSize="10" fill="#111">BEDROOMS</text>

        <rect x="47.500" y="455.500" width="155" height="100" stroke="#cfe0ee" strokeWidth="3" />
        <rect x="47.500" y="455.500" width="155" height="100" stroke="#1a6fb8" strokeWidth="2" strokeDasharray="2 1" />
        <path d="M125 440v13" stroke="#999" strokeWidth="1.500" strokeDasharray="2 2" />
        <circle cx="125" cy="434" r="5.500" fill="url(#knob)" stroke="#184d18" strokeWidth="1.200" />
        <circle cx="125" cy="505.500" r="6.500" stroke="#666" />
        <path d="M125 496.500v5M122 499.500h6" stroke="#444" />
        <circle cx="125" cy="505.500" r="1" fill="#444" />
        {[[48.5, 456.5], [201.5, 456.5], [48.5, 554.5], [201.5, 554.5]].map(([x, y]) => <Handle key={`${x}-${y}`} x={x} y={y} s={10} />)}
        {[[124.5, 456.5], [124.5, 554.5], [48.5, 505.5], [201.5, 505.5]].map(([x, y]) => <Handle key={`${x}-${y}`} x={x} y={y} s={8} />)}
      </g>
    </svg>
  );
}

/* ---------- status bar ---------- */

function Round({ label, dim = false, d }: { label: string; dim?: boolean; d: string }) {
  return (
    <IconButton label={label} className={dim ? 'opacity-50' : ''}>
      <Icon className="h-[22px] w-[22px]" box={22}>
        <circle cx="11" cy="11" r="10.300" fill="#f8f8f8" stroke="#777" />
        <path d={d} stroke="#359ff2" strokeWidth="2.200" />
      </Icon>
    </IconButton>
  );
}

function StatusBar() {
  return (
    <div className="flex h-[31px] shrink-0 items-center overflow-hidden">
      <div className="flex w-[57px] shrink-0 items-center self-stretch pl-px"><Grip /><span className="ml-[14px]"><DoubleChevron /></span></div>
      <Grip />
      <div className="ml-[3px] flex gap-[6px]">
        <Round label="First page" dim d="M7 6v10M15 6l-5 5 5 5" />
        <Round label="Previous page" dim d="M13 6l-5 5 5 5" />
      </div>
      <label className="ml-[5px] flex h-[23px] w-[90px] shrink-0 items-center justify-end rounded-xs border border-[#aaa] bg-white pr-[3px]">
        <input aria-label="Page number" defaultValue="1" className="w-full min-w-0 text-right outline-none" />
        <span className="pl-px text-[13px]">/</span>
        <span className="pb-1 text-[9px] text-[#555]">8</span>
      </label>
      <div className="ml-1 flex gap-[6px]">
        <Round label="Next page" d="M9 6l5 5-5 5" />
        <Round label="Last page" d="M15 6v10M7 6l5 5-5 5" />
      </div>
      <div className="mr-[5px] ml-[3px] flex h-7"><Sep /></div>
      <DoubleChevron />
      <span className="ml-[3px] flex self-stretch"><Grip /></span>
      <IconButton label="Single page" className="ml-[5px]">
        <svg width="18" height="22" viewBox="0 0 18 22" fill="none" aria-hidden="true">
          <path d="M1.500.5h10l5 5v16h-15z" fill="#fff" stroke="#888" /><path d="M11 .5v5.500h5.500z" fill="#666" />
        </svg>
      </IconButton>
      <IconButton label="Continuous" className="ml-[5px] h-7 w-7 border border-[#b9ac8a] bg-[#e4cf9d]">
        <svg width="18" height="24" viewBox="0 0 18 24" fill="none" aria-hidden="true">
          <path d="M1.500 0v10h15V0M1.500 24V13.500h9l6 6V24" fill="#fff" stroke="#888" /><path d="M10 13.500v6h6.500z" fill="#555" />
        </svg>
      </IconButton>
      <span className="ml-[2px]"><DoubleChevron /></span>
      <span className="ml-[3px] flex self-stretch"><Grip /></span>
      <label className="relative ml-px flex h-[23px] w-[82px] shrink-0 items-center rounded-xs border border-[#aaa] bg-white">
        <select aria-label="Zoom" defaultValue="50%" className="w-full appearance-none bg-transparent pl-[3px] outline-none">
          <option>50%</option>
          <option>100%</option>
        </select>
        <span className="pointer-events-none absolute right-1"><Chevron /></span>
      </label>
      <div className="mr-[5px] ml-[2px] flex h-7"><Sep /></div>
      <Round label="Zoom out" d="M5 11h12" />
      <span className="ml-[6px]"><DoubleChevron /></span>
      <span className="ml-[3px] flex self-stretch"><Grip /></span>
      <span className="mr-px ml-auto"><DoubleChevron /></span>
      <span className="flex w-[14px] justify-center self-start pt-1">
        <svg width="8" height="8" fill="none" stroke="#333" strokeWidth="1.400" aria-hidden="true"><path d="M1 1l3 3 3-3M0 7h8" /></svg>
      </span>
    </div>
  );
}

/* ---------- document pane ---------- */

function DocumentPane() {
  return (
    <main className="flex min-w-0 flex-1 flex-col">
      <div className="flex h-[31px] shrink-0 bg-linear-to-b from-[#7b7b7b] to-[#969696]">
        <div className="flex w-[100px] shrink-0 items-start rounded-tr-xs bg-white">
          <span className="ml-[5px] flex h-[30px] flex-1 items-center border-b-2 border-[#9a9a9a] pt-[2px] whitespace-nowrap">Architecture *</span>
          <IconButton label="Close tab" className="mr-1 h-[18px] w-[10px]">
            <svg width="7" height="7" stroke="#222" strokeWidth="1.500" aria-hidden="true"><path d="M1 1l5 5M6 1L1 6" /></svg>
          </IconButton>
        </div>
        <IconButton label="New tab" className="mt-[3px] ml-[2px] mb-px w-[27px] rounded-xs bg-[#c6c6c6]">
          <svg width="15" height="15" stroke="#222" aria-hidden="true"><path d="M7.500 0v15M0 7.500h15" /></svg>
        </IconButton>
        <IconButton label="Close document" className="mt-px mr-px mb-px ml-auto w-[30px] rounded-xs bg-[#cdcdcd]">
          <svg width="12" height="12" stroke="#111" strokeWidth="1.200" aria-hidden="true"><path d="M0 0l12 12M12 0L0 12" /></svg>
        </IconButton>
      </div>
      <div className="flex min-h-0 flex-1 border-t-[3px] border-white bg-[#f3f3f3]">
        <SideBar />
        <div className="flex min-w-0 flex-1 flex-col">
          <div className="flex min-h-0 flex-1">
            <div className="min-w-0 flex-1 overflow-hidden border border-[#555] bg-white shadow-[inset_1px_2px_2px_#bbb]"><Canvas /></div>
            <div className="flex w-4 shrink-0 flex-col items-center bg-[#efefef] py-1">
              <Chevron up />
              <span className="mt-1 h-4 w-[5px] rounded-full bg-[#858585]" />
              <span className="mt-auto"><Chevron /></span>
            </div>
          </div>
          <div className="flex h-[15px] shrink-0 items-center pr-[20px] pl-[3px]">
            <svg width="8" height="8" fill="none" stroke="#555" strokeWidth="1.500" aria-hidden="true"><path d="M5 1L2 4l3 3" /></svg>
            <span className="ml-1 h-[5px] w-[402px] rounded-full bg-[#858585]" />
            <svg width="8" height="8" className="ml-auto" fill="none" stroke="#333" strokeWidth="1.500" aria-hidden="true"><path d="M2 1l3 3-3 3" /></svg>
          </div>
          <StatusBar />
        </div>
      </div>
    </main>
  );
}

/* ---------- properties ---------- */

function Section({ title, selected = false, children }: { title: string; selected?: boolean; children: ReactNode }) {
  return (
    <section>
      <button
        type="button"
        aria-expanded="true"
        className={`flex w-full items-center gap-1 border pl-[3px] text-left leading-[19px] font-bold text-[#6a6a6a] ${
          selected ? 'border-[#5e99c9] bg-[#aecde6]' : 'border-[#e3e3e3] bg-[#f0f0f0]'
        }`}
      >
        <svg width="9" height="7" viewBox="0 0 9 7" fill="none" stroke="#333" strokeWidth="1.600" aria-hidden="true"><path d="M.8 1.500l3.700 3.700 3.700-3.700" /></svg>
        {title}
      </button>
      <table className="w-full table-fixed border-collapse">
        <tbody>{children}</tbody>
      </table>
    </section>
  );
}

function Row({ label, children }: { label: string; children: ReactNode }) {
  return (
    <tr className="h-[23px] border-b border-[#e3e3e3]">
      <th scope="row" className="w-[102px] border-r border-[#e3e3e3] pr-[3px] text-right font-normal text-[#6e6e6e]">{label}</th>
      <td className="pl-[2px] whitespace-nowrap">
        <div className="flex items-center gap-1">{children}</div>
      </td>
    </tr>
  );
}

function Properties() {
  return (
    <aside className="flex w-[292px] shrink-0 flex-col overflow-hidden bg-[#f9e5b4] pl-[2px]">
      <div className="flex h-[24px] shrink-0 items-center pr-[5px] pl-[3px]">
        <h2 className="flex-1">Oval Properties</h2>
        <span className="mb-[6px] flex">
          <IconButton label="Close panel">
            <svg width="7" height="7" stroke="#222" strokeWidth="1.500" aria-hidden="true"><path d="M1 1l5 5M6 1L1 6" /></svg>
          </IconButton>
        </span>
      </div>
      <div className="flex min-h-0 flex-1 bg-[#f0f0f0]">
        <div className="min-w-0 flex-1 overflow-hidden bg-white">
          <Section title="General" selected>
            {generalRows.map(([label, value]) => (
              <Row key={label} label={label}>
                <span className={value.length > 24 ? 'text-[11px]' : ''}>{value}</span>
              </Row>
            ))}
          </Section>
          <Section title="Style">
            <Row label="Fill Color">
              <svg width="15" height="15" fill="none" aria-hidden="true"><path d="M1 1h13v13H1z" stroke="#888" /><path d="M5 5l5 5M10 5l-5 5" stroke="#555" strokeWidth="1.200" /></svg>
              None
            </Row>
            <Row label="Stroke Color">
              <span className="size-[18px] rounded-[3px] border-2 border-[#ff0000] bg-white" />
              RGB: 255, 0, 0
            </Row>
            <Row label="Border Style"><span className="ml-px h-px w-[34px] bg-black" />Solid</Row>
            <Row label="Border Width"><span className="ml-px h-px w-4 bg-black" />1 pt</Row>
            <Row label="Opacity">
              <svg width="16" height="16" className="ml-px" aria-hidden="true">
                <defs>
                  <pattern id="checker" width="4" height="4" patternUnits="userSpaceOnUse"><path d="M0 0h2v2H0zM2 2h2v2H2z" fill="#000" /></pattern>
                </defs>
                <rect width="16" height="16" fill="url(#checker)" />
              </svg>
              100%
            </Row>
            <Row label="Blend Mode">
              <svg width="16" height="16" fill="none" aria-hidden="true"><path d="M.5.500h15v15H.5z" fill="#fff" stroke="#bbb" /><path d="M2 5h9v9H2z" fill="#0a6fd6" /><path d="M4 2h10v10H4z" fill="#f97f0a" /></svg>
              Normal
            </Row>
            <Row label="Rotation">0°</Row>
          </Section>
        </div>
        <div className="flex w-[15px] shrink-0 flex-col items-center py-1">
          <Chevron up />
          <span className="mt-1 mb-[14px] w-[5px] flex-1 rounded-full bg-[#858585]" />
          <Chevron />
        </div>
      </div>
    </aside>
  );
}

export default function App() {
  const [activeTab, setActiveTab] = useState('Comment');

  return (
    <div className="flex h-screen flex-col overflow-hidden rounded-lg border border-[#a6a6a6] bg-[#f3f3f3] font-['Open_Sans','Noto_Sans',sans-serif] text-[12px] leading-4 text-[#111]">
      <TitleBar />
      <RibbonTabs active={activeTab} onSelect={setActiveTab} />
      <Ribbon />
      <div className="flex min-h-0 flex-1 border-t border-[#555]">
        <DocumentPane />
        <div className="flex w-[10px] shrink-0 items-center bg-linear-to-b from-[#7b7b7b] to-[#b2b2b2]">
          <button type="button" aria-label="Collapse panel" className="flex h-[60px] w-full items-center justify-center rounded-l-xs border border-[#777] bg-[#e4e4e4]">
            <svg width="6" height="8" fill="none" stroke="#222" strokeWidth="1.500" aria-hidden="true"><path d="M1 1l3 3-3 3" /></svg>
          </button>
        </div>
        <Properties />
      </div>
    </div>
  );
}
